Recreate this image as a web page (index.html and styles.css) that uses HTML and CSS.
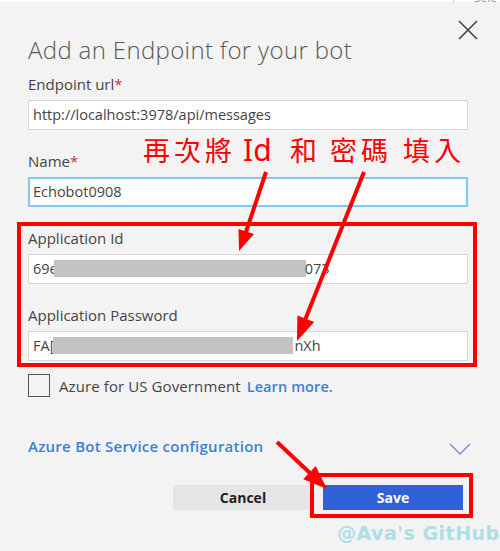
FILE: index.html
```html
<!DOCTYPE html>
<html lang="en">
<head>
<meta charset="utf-8">
<title>Add an Endpoint</title>
<link rel="stylesheet" href="styles.css">
</head>
<body>
<div class="topbar"><span class="topline"></span><span class="toptext">Sele</span></div>
<div class="dialog">
  <header class="head">
    <h1 class="title">Add an Endpoint for your bot</h1>
    <button class="close" aria-label="Close">
      <svg width="20" height="20" viewBox="0 0 20 20"><path d="M1 1 L19 19 M19 1 L1 19" stroke="#444" stroke-width="1.6" fill="none"/></svg>
    </button>
  </header>

  <div class="field">
    <div class="label">Endpoint url<span class="req">*</span></div>
    <div class="input">http://localhost:3978/api/messages</div>
  </div>
  <div class="field">
    <div class="label">Name<span class="req">*</span></div>
    <div class="input focus">Echobot0908</div>
  </div>
  <div class="field">
    <div class="label">Application Id</div>
    <div class="input">69e<span class="redact r1"></span>073</div>
  </div>
  <div class="field">
    <div class="label">Application Password</div>
    <div class="input">FA[<span class="redact r2"></span>nXh</div>
  </div>

  <div class="check-row">
    <span class="checkbox"></span>
    <span class="check-text">Azure for US Government <a class="link">Learn more.</a></span>
  </div>

  <div class="config-row">
    <span class="config">Azure Bot Service configuration</span>
    <svg class="chevron" width="22" height="12" viewBox="0 0 22 12"><path d="M1 1 L11 11 L21 1" stroke="#7f80e6" stroke-width="1.3" fill="none"/></svg>
  </div>

  <div class="buttons">
    <button class="btn cancel">Cancel</button>
    <button class="btn save">Save</button>
  </div>
</div>

<div class="note">
  <span class="w1">再次將</span><span class="w2">Id</span><span class="w3">和</span><span class="w4">密碼</span><span class="w5">填入</span>
</div>

<svg class="overlay" width="500" height="551" viewBox="0 0 500 551">
  <rect x="19" y="224" width="456" height="141" fill="none" stroke="#ff0000" stroke-width="4"/>
  <rect x="312" y="475" width="159" height="41" fill="none" stroke="#ff0000" stroke-width="4"/>
  <g stroke="#ff0000" stroke-width="4" fill="none">
    <line x1="266" y1="172" x2="246" y2="232"/>
    <line x1="364" y1="172" x2="305" y2="320"/>
    <line x1="277" y1="442" x2="311" y2="474"/>
  </g>
  <g fill="#ff0000">
    <polygon points="239,251 254,234 238.5,229"/>
    <polygon points="297,341 314.2,322 297.4,315.4"/>
    <polygon points="327,489 303.3,479.2 315.7,466"/>
  </g>
</svg>

<div class="watermark">@Ava's GitHub</div>
</body>
</html>
```

FILE: styles.css
```css
html, body {
  margin: 0;
  padding: 0;
}
body {
  width: 500px;
  height: 551px;
  overflow: hidden;
  position: relative;
  background: #f3f3f3;
  font-family: "Open Sans", "Noto Sans", sans-serif;
  color: #444;
}
.topbar {
  height: 2px;
  background: #ffffff;
  position: relative;
}
.topline {
  position: absolute;
  left: 453px;
  top: 0;
  width: 1px;
  height: 3px;
  background: #ccc;
}
.toptext {
  position: absolute;
  left: 474px;
  top: -9px;
  font-size: 12px;
  line-height: 14px;
  color: #999;
}
.dialog {
  padding: 18px 32px 0 28px;
}
.head {
  display: flex;
  justify-content: space-between;
  align-items: flex-start;
  margin-bottom: 8px;
}
.title {
  margin: 14px 0 0;
  font-size: 24px;
  line-height: 32px;
  font-weight: 300;
  color: #595959;
  letter-spacing: 0.35px;
}
.close {
  width: 20px;
  height: 20px;
  padding: 0;
  margin: 0 -10px 0 0;
  border: 0;
  background: none;
  display: block;
}
.close svg {
  display: block;
}
.field {
  margin-bottom: 21px;
}
.label {
  font-size: 15px;
  line-height: 20px;
  margin-bottom: 6px;
  color: #454545;
}
.req {
  color: #c0392b;
}
.input {
  box-sizing: border-box;
  height: 30px;
  background: #fff;
  border: 1px solid #d6d6d6;
  padding: 0 4px;
  font-size: 14.5px;
  line-height: 28px;
  color: #444;
  white-space: nowrap;
  overflow: hidden;
}
.input.focus {
  border: 2px solid #7ccbec;
  padding: 0 3px;
  line-height: 26px;
}
.redact {
  display: inline-block;
  vertical-align: middle;
  height: 17px;
  background: #c3c3c3;
  margin-top: -3px;
}
.r1 {
  width: 252px;
  margin-left: -4px;
  margin-right: -1px;
}
.r2 {
  width: 240px;
  margin-left: -1px;
  margin-right: 1px;
}
.check-row {
  display: flex;
  align-items: center;
  gap: 9px;
  margin-top: -8px;
  height: 23px;
}
.checkbox {
  box-sizing: border-box;
  width: 22px;
  height: 23px;
  border: 1px solid #555;
  background: #f3f3f3;
}
.check-text {
  font-size: 15px;
  color: #454545;
  letter-spacing: 0.1px;
}
.link {
  color: #3d7fd6;
  font-weight: 600;
  font-size: 14.5px;
  margin-left: 2px;
}
.config-row {
  display: flex;
  justify-content: space-between;
  align-items: center;
  margin-top: 39px;
  height: 20px;
}
.config {
  font-size: 15px;
  font-weight: 600;
  color: #3d80d6;
  line-height: 20px;
  letter-spacing: 0.25px;
}
.chevron {
  margin-right: -3px;
  margin-top: 6px;
}
.buttons {
  display: flex;
  justify-content: flex-end;
  gap: 10px;
  margin-top: 29px;
  padding-right: 5px;
}
.btn {
  width: 140px;
  height: 25px;
  border: 0;
  font-family: "Open Sans", sans-serif;
  font-weight: 700;
  font-size: 14px;
  padding: 0;
}
.cancel {
  background: #e6e6e6;
  color: #222;
}
.save {
  background: #2f62d6;
  color: #fff;
}
.note {
  position: absolute;
  left: 143px;
  top: 134px;
  display: flex;
  align-items: baseline;
  font-family: "Noto Sans CJK TC", "Noto Sans CJK SC", sans-serif;
  font-size: 27px;
  line-height: 32px;
  color: #ff0000;
  white-space: nowrap;
}
.w1, .w3, .w4, .w5 {
  letter-spacing: 4px;
}
.w2 {
  margin-left: 7px;
  font-family: "Noto Sans", sans-serif;
  font-size: 30px;
  width: 28px;
}
.w3 {
  margin-left: 19px;
}
.w4 {
  margin-left: 9px;
}
.w5 {
  margin-left: 11px;
}
.overlay {
  position: absolute;
  left: 0;
  top: 0;
  pointer-events: none;
}
.watermark {
  position: absolute;
  left: 337px;
  top: 520px;
  font-family: "DejaVu Sans", sans-serif;
  font-weight: 700;
  font-size: 19px;
  line-height: 26px;
  color: #ade0e5;
  letter-spacing: 0.5px;
  white-space: nowrap;
}
```
